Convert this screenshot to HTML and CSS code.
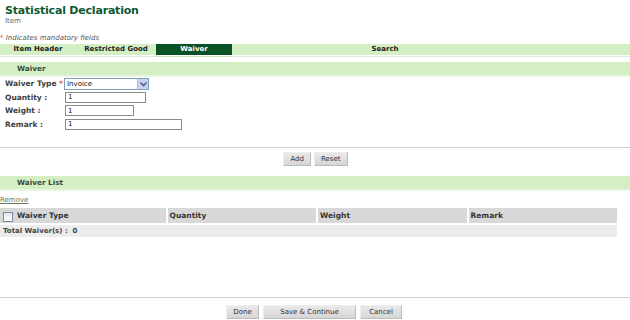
FILE: index.html
```html
<!DOCTYPE html>
<html lang="en">
  <head>
    <meta charset="UTF-8" />
    <title>Statistical Declaration</title>
    <link rel="stylesheet" href="styles.css">
  </head>
  <body>
    <div class="page-title">
      <h1>Statistical Declaration</h1>
      <div class="subtitle">Item</div>
    </div>

    <div class="mandatory"><span class="req">*</span> Indicates mandatory fields</div>

    <div class="tabs">
      <div class="tab">Item Header</div>
      <div class="tab">Restricted Good</div>
      <div class="tab active">Waiver</div>
      <div class="tab">Search</div>
      <div class="tab"></div>
    </div>
    <div class="tab-rule"><span class="tab-mark"></span></div>

    <div class="section-head">Waiver</div>

    <div class="form">
      <div class="row">
        <label>Waiver Type <span class="req">*</span></label>
        <div class="select">
          <span class="select-text">Invoice</span>
          <span class="select-btn">
            <svg width="9" height="8" viewBox="0 0 9 8"><path d="M1.5 2.5 L4.5 5.5 L7.5 2.5" fill="none" stroke="#4d6185" stroke-width="1.6"/></svg>
          </span>
        </div>
      </div>
      <div class="row">
        <label>Quantity :</label>
        <input class="field w-qty" type="text" value="1" />
      </div>
      <div class="row">
        <label>Weight :</label>
        <input class="field w-wt" type="text" value="1" />
      </div>
      <div class="row">
        <label>Remark :</label>
        <input class="field w-rem" type="text" value="1" />
      </div>
    </div>

    <div class="actions">
      <button>Add</button>
      <button>Reset</button>
    </div>

    <div class="section-head">Waiver List</div>

    <a class="remove" href="#">Remove</a>

    <table class="list">
      <thead>
        <tr>
          <th class="chk"><span class="checkbox"></span></th>
          <th class="c1">Waiver Type</th>
          <th>Quantity</th>
          <th>Weight</th>
          <th>Remark</th>
        </tr>
      </thead>
      <tbody>
        <tr class="total">
          <td colspan="5">Total Waiver(s) : &nbsp;0</td>
        </tr>
      </tbody>
    </table>

    <div class="spacer"></div>

    <div class="footer">
      <button class="b-done">Done</button>
      <button class="b-save">Save &amp; Continue</button>
      <button class="b-cancel">Cancel</button>
    </div>
  </body>
</html>
```

FILE: styles.css
```css
body {
  margin: 0;
  background: #fff;
  font-family: "DejaVu Sans", Verdana, sans-serif;
  font-size: 8px;
  color: #333;
  width: 630px;
}
.page-title {
  padding: 4px 0 0 5px;
}
h1 {
  margin: 0;
  font-size: 11px;
  letter-spacing: -0.2px;
  line-height: 13px;
  color: #0e5a30;
  font-weight: bold;
}
.subtitle {
  font-size: 7px;
  color: #666;
  line-height: 9px;
}
.mandatory {
  margin-top: 8px;
  font-size: 7px;
  font-style: italic;
  color: #555;
  line-height: 9px;
}
.req {
  color: #e05050;
  font-style: normal;
}
.tabs {
  display: grid;
  grid-template-columns: 76px 80px 76px 306px 1fr;
  background: #d4efc4;
  margin-top: 1px;
  height: 11px;
}
.tab {
  text-align: center;
  font-weight: bold;
  font-size: 7px;
  line-height: 11px;
  color: #222;
}
.tab.active {
  background: #0a5126;
  color: #fff;
}
.tab-rule {
  height: 1px;
  margin-top: 1px;
  background: #e4e4e4;
  position: relative;
}
.tab-mark {
  position: absolute;
  left: 156px;
  top: 0;
  width: 76px;
  height: 1px;
  background: #c9e6b6;
}
.section-head {
  margin-top: 5px;
  background: #d4efc4;
  border-bottom: 2px solid #e9f5e2;
  height: 13px;
  line-height: 13px;
  padding-left: 17px;
  font-weight: bold;
  font-size: 7.3px;
  color: #3b4b3b;
}
.form {
  padding: 0 0 0 5px;
}
.row {
  display: flex;
  align-items: center;
  height: 13.5px;
}
.row label {
  width: 59px;
  font-weight: bold;
  font-size: 7.5px;
  color: #3d3d3d;
}
.select {
  display: flex;
  width: 85px;
  height: 12px;
  box-sizing: border-box;
  border: 1px solid #7f9db9;
  background: #fff;
}
.select-text {
  flex: 1;
  font-size: 7px;
  line-height: 10px;
  padding-left: 2px;
  color: #111;
}
.select-btn {
  width: 10px;
  background: #c8d4ee;
  border-left: 1px solid #b5c2dd;
  display: flex;
  align-items: center;
  justify-content: center;
}
.field {
  height: 11px;
  box-sizing: border-box;
  border: 1px solid #8a8a8a;
  padding: 0 2px;
  font-family: "DejaVu Sans", Verdana, sans-serif;
  font-size: 7px;
  margin: 0 0 0 1px;
  color: #111;
}
.w-qty {
  width: 81px;
}
.w-wt {
  width: 69px;
}
.w-rem {
  width: 117px;
}
.actions {
  margin-top: 16px;
  border-top: 1px solid #cfcfc6;
  padding-top: 4px;
  display: flex;
  justify-content: center;
  gap: 3px;
  padding-left: 1px;
}
button {
  font-family: "DejaVu Sans", Verdana, sans-serif;
  font-size: 7px;
  color: #333;
  height: 14px;
  padding: 0 6px;
  background: linear-gradient(#e9e9e9, #d6d6d6);
  border: 1px solid #eee;
  border-right-color: #bbb;
  border-bottom-color: #bbb;
}
.actions + .section-head {
  margin-top: 10px;
}
.remove {
  display: block;
  margin-top: 5px;
  font-size: 7px;
  color: #6b7a5e;
  line-height: 9px;
  width: 29px;
}
.list {
  margin-top: 3px;
  width: 617px;
  border-collapse: collapse;
  table-layout: fixed;
}
.list th {
  background: #d8d8d8;
  height: 15px;
  text-align: left;
  font-size: 7.5px;
  color: #333;
  padding: 0 0 0 2px;
  border-left: 2px solid #fff;
  width: 146px;
}
.list th.chk {
  width: 12px;
  border-left: none;
  padding: 0 0 0 3px;
}
.list th.c1 {
  border-left: none;
  width: 148px;
}
.checkbox {
  display: block;
  width: 8px;
  height: 8px;
  border: 1px solid #7a8aa8;
  background: linear-gradient(#e4e8f0, #fff);
  margin-top: 2px;
}
.total td {
  background: #ececec;
  height: 12px;
  font-weight: bold;
  font-size: 7px;
  color: #444;
  padding: 0 0 0 3px;
  border-top: 2px solid #fff;
}
.spacer {
  height: 60px;
}
.footer {
  border-top: 1px solid #cfcfc6;
  padding-top: 7px;
  display: flex;
  justify-content: center;
  gap: 4px;
  padding-right: 2px;
}
.b-done {
  width: 33px;
}
.b-save {
  width: 93px;
}
.b-cancel {
  width: 42px;
}
```
